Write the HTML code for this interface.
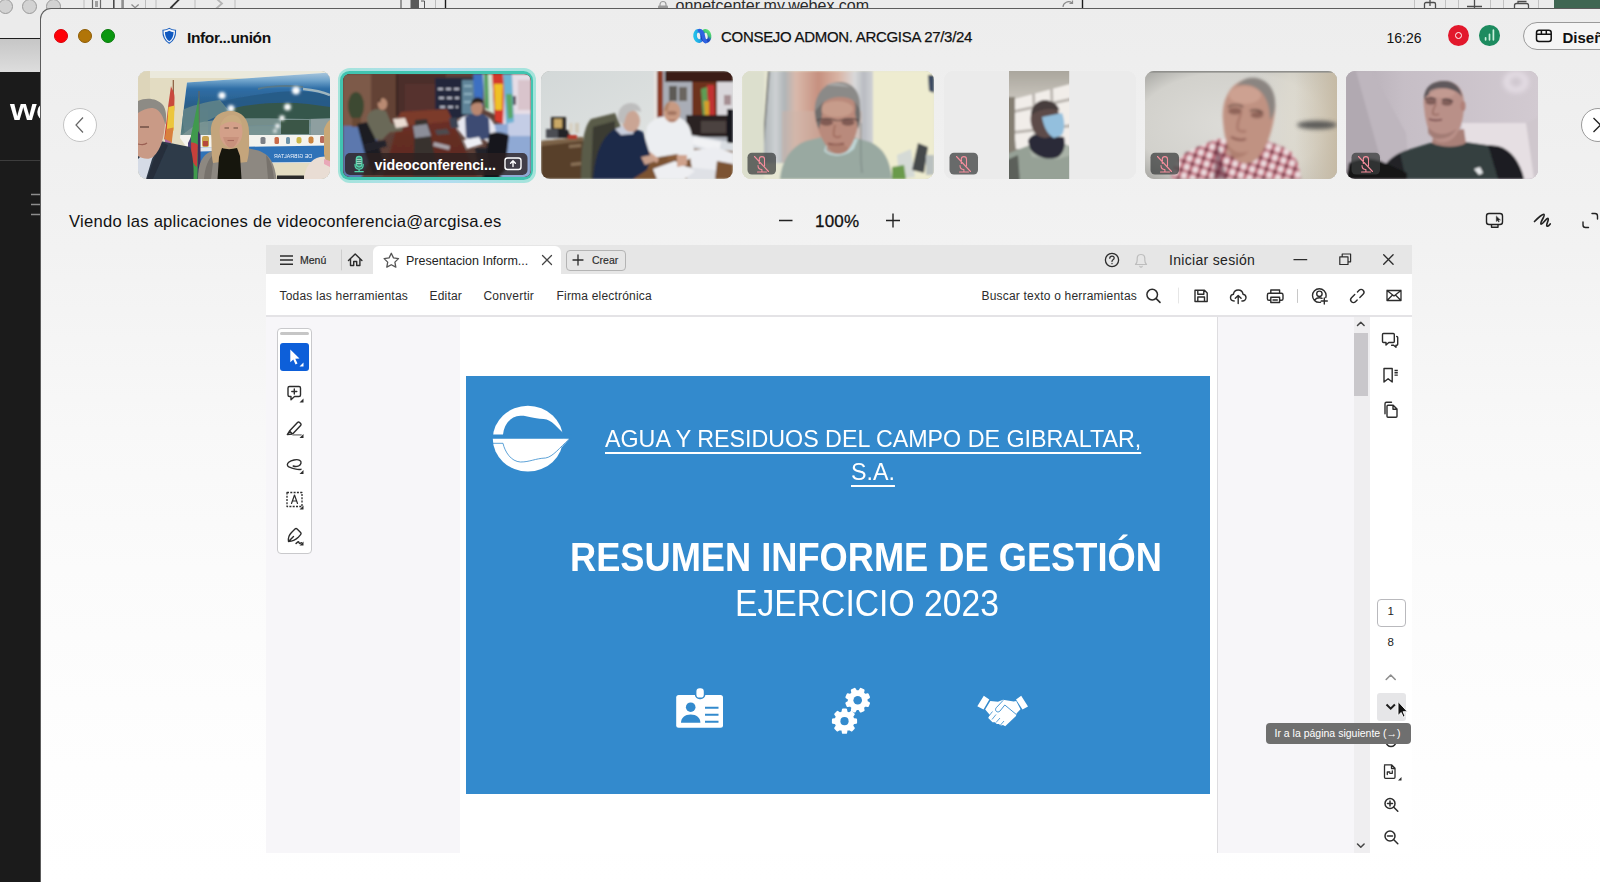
<!DOCTYPE html>
<html lang="es">
<head>
<meta charset="utf-8">
<title>CONSEJO ADMON. ARCGISA 27/3/24</title>
<style>
*{box-sizing:border-box;margin:0;padding:0}
html,body{width:1600px;height:882px;overflow:hidden;background:#ececec;font-family:"Liberation Sans",sans-serif;color:#111}
.abs{position:absolute}
#stage{position:relative;width:1600px;height:882px;overflow:hidden;background:#ececec}
/* background browser window */
#bgtop{left:0;top:0;width:1600px;height:39px;background:#ebebeb;border-bottom:1px solid #1c1c1c}
#bgbar{left:0;top:39px;width:60px;height:34px;background:linear-gradient(#c6c6c6,#dedede)}
#bgside{left:0;top:72px;width:60px;height:810px;background:#1b1b1b}
.gdot{width:15px;height:15px;border-radius:50%;background:#d2d2d2;border:1px solid #9a9a9a;top:-1px}
/* main window */
#win{left:40px;top:8px;width:1600px;height:900px;border-radius:11px 0 0 0;border:1px solid #5c5c5c;border-right:0;border-bottom:0;background:linear-gradient(#ededed 0,#efefef 100px,#f2f2f2 240px,#f8f8f8 420px,#fbfbfb 560px,#fefefe 760px,#fff 874px)}
.tl{width:14px;height:14px;border-radius:50%;top:29px}
.t{white-space:nowrap;line-height:1}
.thumb{top:71px;width:192px;height:108px;border-radius:9px;overflow:hidden}
.thumb svg{display:block}
.mute{left:9px;top:81px;width:28px;height:21px;border-radius:5px;background:rgba(80,80,80,.78)}
/* acrobat */
#acro{left:266px;top:245px;width:1146px;height:608px;background:#f7f6f9;overflow:hidden}
#tabbar{left:0;top:0;width:1146px;height:29px;background:#e6e6e6}
#tab{left:107px;top:1px;width:188px;height:28px;background:#fff;border-radius:6px 6px 0 0}
#toolbar{left:0;top:29px;width:1146px;height:43px;background:#fff;border-bottom:2px solid #e4e3e6}
.ic{position:absolute;overflow:visible}
</style>
</head>
<body>
<div id="stage">
<!-- BG -->
<div id="bgtop" class="abs">
  <div class="abs gdot" style="left:-2px"></div>
  <div class="abs gdot" style="left:22px"></div>
  <div class="abs gdot" style="left:46px"></div>
  <svg class="ic" style="left:0;top:0" width="1600" height="9" viewBox="0 0 1600 9">
    <g fill="none" stroke="#bdbdbd" stroke-width="1">
      <path d="M84 0V9M145.5 0V9M156 0V9M235 0V9M195 0V9"/>
    </g>
    <rect x="92.5" y="-3" width="8" height="14" fill="none" stroke="#6a6a6a" stroke-width="1.2"/>
    <path d="M95 2h3M95 4h3M95 6h3" stroke="#555" stroke-width="1"/>
    <path d="M113.8 0V9" stroke="#4a4a4a" stroke-width="1.6"/>
    <path d="M122.6 0V9" stroke="#8e8e8e" stroke-width="2.6"/>
    <path d="M131.5 4.5l3.6 3.2 3.6-3.2" fill="none" stroke="#8c8c8c" stroke-width="1.3"/>
    <path d="M179.500 -1l-8.5 8.500 8.500 8.500" fill="none" stroke="#333" stroke-width="1.800"/>
    <path d="M213.5 -4l8.500 7.5-8.500 7.500" fill="none" stroke="#b5b5b5" stroke-width="1.8"/>
    <rect x="410.500" y="-2" width="8.500" height="12" fill="#595959"/>
    <path d="M401 0V9" stroke="#444" stroke-width="1"/>
    <path d="M421 1h3.500V9" fill="none" stroke="#555" stroke-width="1"/>
    <path d="M435.500 0V9" stroke="#bbb" stroke-width="1"/>
    <path d="M445.500 0V9" stroke="#1a1a1a" stroke-width="1.400"/>
    <path d="M1082.500 0V9" stroke="#1a1a1a" stroke-width="1.400"/>
    <rect x="658" y="5.500" width="10" height="8" rx="1" fill="#9a9a9a"/>
    <path d="M660 6V4.500a3 3 0 0 1 6 0V6" fill="none" stroke="#9a9a9a" stroke-width="1.200"/>
    <path d="M1063 7a5.500 5.500 0 0 1 9-4M1072.500 0.500v3h-3" fill="none" stroke="#8a8a8a" stroke-width="1.200"/>
    <g fill="none" stroke="#c2c2c2" stroke-width="1"><path d="M1414.500 0V9M1445.500 0V9M1458.500 0V9M1490.500 0V9M1503.500 0V9M1538.500 0V9"/></g>
    <rect x="1424.500" y="2.500" width="11" height="10" rx="1.500" fill="none" stroke="#4d4d4d" stroke-width="1.300"/>
    <path d="M1430 0V6" stroke="#4d4d4d" stroke-width="1.300"/>
    <path d="M1474.500 0V8M1467 6.500h15" stroke="#4d4d4d" stroke-width="1.300"/>
    <rect x="1514.500" y="3.500" width="14" height="10" rx="2" fill="none" stroke="#4d4d4d" stroke-width="1.300"/>
    <path d="M1518 3V1.500h8.500" fill="none" stroke="#4d4d4d" stroke-width="1.300"/>
    <rect x="1554" y="0" width="46" height="9" fill="#3f6652"/>
  </svg>
  <div class="abs t" style="left:675.500px;top:-2px;font-size:16px;color:#2a2a2a;letter-spacing:0">onnetcenter.my.webex.com</div>
</div>
<div id="bgbar" class="abs"></div>
<div id="bgside" class="abs">
  <div class="abs t" style="left:10px;top:24px;font-size:29px;font-weight:bold;color:#fff;letter-spacing:-.500px;transform:scaleX(1.180);transform-origin:0 0">we</div>
  <div class="abs" style="left:0;top:88px;width:60px;height:1px;background:#3d3d3d"></div>
  <svg class="ic" style="left:28px;top:118px" width="14" height="30" viewBox="0 0 14 30"><path d="M3 4.500h12M3 14.500h12M3 24.500h12" stroke="#8c8c8c" stroke-width="1.400"/></svg>
</div>
<!-- WINDOW -->
<div id="win" class="abs"></div>
<div class="abs tl" style="left:54px;background:#fe0006;border:1px solid #d9000a"></div>
<div class="abs tl" style="left:78px;background:#b17508;border:1px solid #8e5c05"></div>
<div class="abs tl" style="left:101px;background:#0a970f;border:1px solid #0a7a0d"></div>
<svg class="ic" style="left:161px;top:27px" width="17" height="18" viewBox="161 27 17 18"><path d="M169.250 28.400c2 1.300 4 1.700 6.300 1.800.300 5.800-1.600 10.200-6.300 13-4.700-2.800-6.600-7.200-6.300-13 2.300-.100 4.300-.500 6.300-1.800z" fill="#f4f6fb" stroke="#1a5fbe" stroke-width="1.100"/><path d="M169.250 30.700c1.500.900 2.700 1.200 4.300 1.300.100 4.100-1.200 7-4.300 9.200-3.100-2.200-4.400-5.100-4.300-9.200 1.600-.100 2.800-.400 4.300-1.300z" fill="#1059c0"/></svg>
<div class="abs t" style="left:187px;top:29.600px;font-size:15.500px;font-weight:bold;color:#111;letter-spacing:-.380px">Infor...unión</div>
<svg class="ic" style="left:690px;top:26px" width="26" height="20" viewBox="690 26 26 20"><defs><linearGradient id="wxa" x1="0" y1="0" x2="1" y2="0"><stop offset="0" stop-color="#22c0ea"/><stop offset=".55" stop-color="#23a0e2"/><stop offset="1" stop-color="#2f5fe0"/></linearGradient><linearGradient id="wxb" x1="1" y1="0" x2=".2" y2="1"><stop offset="0" stop-color="#5fe36c"/><stop offset=".35" stop-color="#3fc07a"/><stop offset=".6" stop-color="#1f4fc4"/><stop offset="1" stop-color="#1a3cae"/></linearGradient></defs><ellipse cx="698.700" cy="36" rx="3.600" ry="5.100" fill="none" stroke="url(#wxa)" stroke-width="3.700" transform="rotate(-8 698.700 36)"/><ellipse cx="705.900" cy="36" rx="3.600" ry="5.100" fill="none" stroke="url(#wxb)" stroke-width="3.700" transform="rotate(-8 705.900 36)"/><path d="M699.500 30.500c3 0 3.500 3.500 4 6.500s.8 4 2.200 4.600" fill="none" stroke="#2f62e2" stroke-width="3.600" stroke-linecap="round"/></svg>
<div class="abs t" style="left:721px;top:29.300px;font-size:15px;color:#111;letter-spacing:-.300px;-webkit-text-stroke:.250px #111">CONSEJO ADMON. ARCGISA 27/3/24</div>
<div class="abs t" style="left:1386.500px;top:30.800px;font-size:14px;color:#111">16:26</div>
<div class="abs" style="left:1448.100px;top:24.900px;width:21px;height:21px;border-radius:50%;background:#e2182c"></div>
<div class="abs" style="left:1454.900px;top:31.700px;width:7.400px;height:7.400px;border-radius:50%;border:1.400px solid #fff"></div>
<div class="abs" style="left:1479.400px;top:25px;width:20.600px;height:20.600px;border-radius:50%;background:#1d8b5f"></div>
<svg class="ic" style="left:1479px;top:25px" width="22" height="22" viewBox="1479 25 22 22"><path d="M1485.600 39.800v-2M1489.500 39.800v-5.500M1493.400 39.800v-9.600" stroke="#c9eedb" stroke-width="1.700" stroke-linecap="round"/></svg>
<div class="abs" style="left:1522.500px;top:21.500px;width:120px;height:28px;border-radius:14px;border:1px solid #9a9a9a;background:#f5f5f5"></div>
<svg class="ic" style="left:1534px;top:27px" width="20" height="18" viewBox="1534 27 20 18"><rect x="1536.500" y="30.300" width="14.700" height="11.200" rx="2.500" fill="none" stroke="#111" stroke-width="1.500"/><path d="M1536.500 34.300h14.700M1541.400 30.300v4M1546.300 30.300v4" stroke="#111" stroke-width="1.500"/></svg>
<div class="abs t" style="left:1562.500px;top:29.500px;font-size:15px;font-weight:bold;color:#111">Diseño</div>
<!-- nav arrows -->
<div class="abs" style="left:63px;top:108px;width:34px;height:34px;border-radius:50%;background:#fff;border:1px solid #c4c4c4"></div>
<svg class="ic" style="left:63px;top:108px" width="34" height="34" viewBox="0 0 34 34"><path d="M20 9.500l-7 7.500 7 7.500" fill="none" stroke="#666" stroke-width="1.200"/></svg>
<div class="abs" style="left:1581px;top:108px;width:34px;height:34px;border-radius:50%;background:#fff;border:1px solid #9a9a9a"></div>
<svg class="ic" style="left:1581px;top:108px" width="34" height="34" viewBox="0 0 34 34"><path d="M12.500 10l7 7-7 7" fill="none" stroke="#222" stroke-width="1.300"/></svg>
<!-- THUMBS -->
<div class="abs thumb" id="th1" style="left:138px;background:#7c8f96"><!--TH1--><svg width="192" height="108" viewBox="0 0 192 108" preserveAspectRatio="none" >
<defs>
<filter id="b1" x="-5%" y="-5%" width="110%" height="110%"><feGaussianBlur stdDeviation=".7"/></filter>
<filter id="b1b" x="-20%" y="-20%" width="140%" height="140%"><feGaussianBlur stdDeviation="1.800"/></filter>
<linearGradient id="sky1" x1="0" y1="0" x2="0" y2="1"><stop offset="0" stop-color="#a9c6dc"/><stop offset=".13" stop-color="#6fa3cb"/><stop offset=".26" stop-color="#2f6ea6"/><stop offset=".5" stop-color="#2a5f8c"/><stop offset=".75" stop-color="#3d6b73"/><stop offset="1" stop-color="#5f8283"/></linearGradient>
<clipPath id="pc1"><path d="M49 11.600L192 1.500V64H42.500z"/></clipPath>
</defs>
<rect width="192" height="108" fill="#e3dcc2"/>
<rect width="192" height="7" fill="#ebe9dc"/>
<path d="M0 0h12v60H0z" fill="#ddd5ba"/>
<g filter="url(#b1)">
 <!-- poster -->
 <path d="M49 11.600L192 1.500V92H60L42 67z" fill="#f4f3ee"/>
 <path d="M49 11.600L192 1.500V64H42.500z" fill="url(#sky1)"/>
 <g clip-path="url(#pc1)">
  <path d="M70 34c20-6 45-10 70-13 20-2 40 0 52 3v30c-20 2-40 2-60 1-25-1-45 3-62 8z" fill="#285a86" opacity=".9"/>
  <path d="M92 38c20-5 50-8 78-5l22 3v16l-60 2c-15 0-30 1-42 3z" fill="#36564c"/>
  <path d="M42 40c10-5 25-9 40-11l10 12c-15 4-30 12-45 22z" fill="#5f8388" opacity=".9"/>
  <path d="M60 52c25-6 60-5 110-4l22-1v17H44z" fill="#7f9896" opacity=".85"/>
  <path d="M143 49h28v14h-28z" fill="#3b5746"/>
  <path d="M173 48h19v16h-19z" fill="#8e9fa0"/>
  <path d="M120 18c10-3 30-4 45-2" stroke="#56788a" stroke-width="2" fill="none"/>
  <path d="M165 18c10 1 20 3 27 6" stroke="#9fb6bf" stroke-width="2.500" fill="none"/>
 </g>
 <g filter="url(#b1b)" fill="#fff"><circle cx="84" cy="24.500" r="3.600"/><circle cx="158" cy="19.500" r="4"/><circle cx="149.500" cy="36" r="3.500"/><circle cx="93" cy="37.500" r="3.500"/><circle cx="144" cy="47" r="2.800"/><circle cx="139.500" cy="55" r="2.300"/><circle cx="137" cy="60" r="1.800"/></g>
 <!-- white strip + crests -->
 <g><rect x="64" y="65" width="7" height="11" rx="2" fill="#c9a24d"/><rect x="65" y="70" width="5" height="5" fill="#b5463d"/>
 <rect x="122.500" y="66" width="5" height="7" rx="1.500" fill="#7b7f86"/><rect x="136.500" y="66" width="4.500" height="7" rx="1.500" fill="#c96a4a"/><rect x="148" y="66" width="4" height="7" rx="1.500" fill="#6d93a8"/><rect x="158.500" y="66" width="5" height="6.500" rx="2" fill="#c9b64a"/><rect x="170.500" y="65.500" width="5" height="7" rx="2" fill="#c9843f"/><rect x="182" y="65" width="4.500" height="7" rx="1.500" fill="#b96a5a"/></g>
 <path d="M62 76.500L192 74.500V91L62 92z" fill="#2f72b8"/>
 <path d="M62 76.500L80 76V80L62 80.500z" fill="#dfe6ee"/>
 <text x="-174" y="86.500" font-family="Liberation Sans,sans-serif" font-size="5.300" fill="#eef3fa" transform="scale(-1 1)">DE GIBRALTAR</text>
 <!-- spain flag -->
 <path d="M35.300 9v30" stroke="#8a5a3a" stroke-width="1.200"/>
 <path d="M33 15c1 4 3.500 5 3.500 12l-.3 12c-1 8-2 22-3 33l-7-4c1-10 3-22 4-33z" fill="#c94a3c"/>
 <path d="M30.500 36l6-1.500-.8 25-7.200 2z" fill="#ecc63c"/>
 <path d="M28.500 58l7-1.500-1.800 15.500-7.200-3.500z" fill="#d9803c"/>
 <path d="M27 68l6 3-1 5-5-2z" fill="#b06aa0"/>
 <!-- green flag -->
 <path d="M61 20v88" stroke="#6b6458" stroke-width="1.100"/>
 <path d="M60.500 26c-2 14-6 30-9 46l2 36h8z" fill="#3f9a4d"/>
 <path d="M52 72c3-1 6 0 8 2l-1 22c-3-2-5-6-5.500-10z" fill="#c8403a"/>
 <path d="M60 60l2.500 4v44h-3z" fill="#3a3360"/>
 <path d="M50 72l3-6 .5 42h-3z" fill="#4b3f78"/>
</g>
<g filter="url(#b1)">
 <!-- woman -->
 <path d="M60 108c0-14 3-24 14-28l14-4 16 0 14 3c12 3 18 10 20.500 29z" fill="#8d8881"/>
 <path d="M66 108c1-12 4-20 10-25l-3 25zM128 84c5 5 7 14 8 24h-6z" fill="#77726c"/>
 <path d="M73 62c-1-12 6-22 19-22 12 0 19 8 19 21 0 10 1 20-2 30l-9 1-18-1-7 1c-2-9-1-20-2-30z" fill="#c4a57b"/>
 <path d="M84 77c4 1.500 10 1.500 15 0l3 8 1.500 23H79.500l1.500-22z" fill="#15130f"/>
 <ellipse cx="93" cy="60.500" rx="11.500" ry="16" fill="#d3a089"/><path d="M85 66c2 8 6 11 8 11s6-3 8-11z" fill="#c8917c"/>
 <path d="M82.500 55c2-8 8-11 12-11 5 0 9 4 9.500 10-5-4-14-5-21.500 1z" fill="#c9ab80"/>
 <path d="M86.500 57h4.500M95.500 57h4.500" stroke="#6b4a3c" stroke-width="1.100"/>
 <path d="M89.500 69.500h6.500" stroke="#a8685c" stroke-width="1.100"/>
 <!-- man -->
 <path d="M0 78l22-8 30 6c3 9 4 20 3.500 32H0z" fill="#2f3a49"/>
 <path d="M0 88l12-12 10-4-8 16-6 20H0z" fill="#d5dbe6"/>
 <path d="M22 71l8 3-15 34h-6z" fill="#252e3b"/>
 <path d="M0 38c6-8 18-9 24-2 3 4 4 10 3 18-1 10-3 24-12 32-4 3-10 2-15-1z" fill="#c99a86"/>
 <path d="M0 30c8-4 19-3 25 4 3 4 4 12 2.500 20-2-7-4-12-8-15-6-4-13-1-19.500 3z" fill="#8d8b85"/>
 <path d="M2 56h9" stroke="#5a3d34" stroke-width="1.200"/>
 <path d="M0 73c4 1 7 1 9-1" stroke="#9a5f52" stroke-width="1.100" fill="none"/>
 <!-- right person -->
 <path d="M166 108c1-12 7-20 16-22l10-1v23z" fill="#e9ddd4"/>
 <path d="M186 58c2-5 4-8 6-9v46c-3-2-5-6-6-12z" fill="#c9a877"/>
 <path d="M186 88l6 2v6l-6-3z" fill="#e9a8b8"/>
 <rect x="139" y="104.500" width="27" height="3.500" fill="#2a2a2a"/>
</g>
</svg><!--/TH1--></div>
<div class="abs" style="left:337.500px;top:68px;width:198.500px;height:114.500px;border-radius:12px;background:linear-gradient(90deg,#a4e4da,#b4dcf2 50%,#a4e4da)"></div>
<div class="abs" style="left:340.300px;top:71px;width:193px;height:108.500px;border-radius:9.500px;background:#41c4b0"></div>
<div class="abs thumb" id="th2" style="left:343px;top:73.700px;width:187.500px;height:103px;border-radius:7px;background:#3a2c2a"><!--TH2--><svg width="188" height="105" viewBox="0 0 188 105" preserveAspectRatio="none" >
<defs>
<filter id="b2" x="-5%" y="-5%" width="110%" height="110%"><feGaussianBlur stdDeviation=".9"/></filter>
<linearGradient id="tb2" x1="0" y1="0" x2="0" y2="1"><stop offset="0" stop-color="#6e3026"/><stop offset="1" stop-color="#5a2a22"/></linearGradient>
</defs>
<rect width="188" height="105" fill="#5d4038"/>
<g filter="url(#b2)">
 <!-- walls -->
 <rect x="0" y="0" width="30" height="60" fill="#7d5a49"/>
 <rect x="28" y="0" width="26" height="60" fill="#644236"/>
 <rect x="53" y="0" width="50" height="42" fill="#4b2d2c"/>
 <rect x="53" y="0" width="1.500" height="42" fill="#2a1a1c"/>
 <rect x="62" y="10" width="30" height="30" fill="#56302f"/>
 <!-- shelf -->
 <rect x="92" y="4" width="40" height="40" fill="#22263a"/>
 <path d="M95 15h22M96 24h20M97 33h18" stroke="#b9bccb" stroke-width="2.200" stroke-dasharray="5 3"/>
 <rect x="119" y="6" width="12" height="34" fill="#5e8398"/>
 <path d="M121 12h8M121 20h8M121 28h8" stroke="#9fc0cc" stroke-width="1.600"/>
 <!-- window right -->
 <rect x="160" y="0" width="28" height="64" fill="#e6dde6"/>
 <rect x="175" y="6" width="13" height="30" fill="#d9c4cc"/>
 <rect x="167" y="22" width="6" height="9" fill="#5a4a58"/>
 <!-- floor -->
 <path d="M0 52h40L18 105H0z" fill="#5c78ae"/>
 <path d="M150 50h38v55h-30z" fill="#8fa9d4"/>
 <path d="M165 40h23v22h-23z" fill="#c4cde6"/>
 <!-- flags -->
 <path d="M130 0h11l-1 34-8 2z" fill="#3d70c2"/>
 <path d="M140 0h10l1 40-9-4z" fill="#d6e6d6"/>
 <path d="M141 0h4l1 36-4-2z" fill="#4f9b5c"/>
 <path d="M149 0h13l-2 50-8-3z" fill="#d4382c"/>
 <path d="M151 10l9 0-1 26-7 0z" fill="#efc126"/>
 <path d="M160 0h9l2 48-8 2z" fill="#6db2d2"/>
 <path d="M163 20l6 0 1 24-5 1z" fill="#58a86a"/>
 <!-- table -->
 <path d="M58 38l46-3 30 67H40z" fill="url(#tb2)"/>
 <path d="M58 38l46-3 6 12-60 6z" fill="#7c3a2c"/>
 <path d="M72 46l12-1 12 57H70z" fill="#39302f"/>
 <path d="M70 52l14-2 4 12-16 2z" fill="#8c8e99"/>
 <path d="M92 56l12-1 3 5-13 1z" fill="#4d4b50"/>
 <path d="M91 68l16 4-1 4-16-4z" fill="#a9a4ab"/>
 <!-- plant -->
 <ellipse cx="13" cy="32" rx="8" ry="14" fill="#3d4a31"/>
 <rect x="9" y="44" width="9" height="9" fill="#6a4a35"/>
 <!-- left man -->
 <path d="M24 44c1-6 6-9 11-9l8 2 5 12 12 4-1 4-12 1-8 8-12-2z" fill="#6b6959"/>
 <ellipse cx="39.500" cy="30" rx="4.800" ry="6" fill="#b98a72"/>
 <path d="M34.500 28c0-4 3-6 6-5.500-2 1-3 3-3 6z" fill="#5c3f30"/>
 <path d="M50 45l12-1 3 8-12 2z" fill="#e9dcd2"/>
 <!-- left chair -->
 <path d="M14 50l10-2 12 24 6 22-12 6-8-20z" fill="#1b1b24"/>
 <path d="M20 70l22-4 2 6-20 6z" fill="#23232c"/>
 <!-- right man -->
 <path d="M112 52c2-6 8-10 14-11h14c6 1 10 5 12 12l2 12-8 4-6-4-14 3-6-6z" fill="#e6e7f0"/>
 <path d="M122 43l6-3h12l6 4 1 20-12 3-12-3z" fill="#3d4c73"/>
 <ellipse cx="134" cy="34" rx="6" ry="7.500" fill="#b9876f"/>
 <path d="M127.500 32c0-6 4-8.500 7.500-8.500s6.500 3 6 7c-3-2.500-9-3-13.500 1.500z" fill="#2a221f"/>
 <path d="M120 66l16-3 4 7-16 5z" fill="#edeef4"/>
 <path d="M106 44l8 0 2 10-8 0z" fill="#3a4253"/>
 <!-- right chair -->
 <path d="M146 60c6-3 14-2 20 1l-4 36-8 8h-14z" fill="#15151b"/>
 <path d="M132 74l12 0 2 20-10 4z" fill="#20202a"/>
</g>
<rect x="2" y="79" width="182.500" height="22" rx="5" fill="#2b2020" fill-opacity=".78"/>
<g fill="none" stroke="#52d3aa" stroke-width="1.300" stroke-linecap="round"><rect x="13.300" y="82.500" width="5.600" height="10.500" rx="2.800" fill="#52d3aa" fill-opacity=".55"/><path d="M12 90.500c0 3 1.800 4.600 4.100 4.600s4.100-1.600 4.100-4.600M16.100 95.300v2.200M12 97.700h8.200"/><path d="M14 85.500h4M14 87.500h4M14 89.500h4" stroke-width=".6" stroke="#d8fff0"/></g>
<text x="31.500" y="95.500" font-family="Liberation Sans,sans-serif" font-weight="bold" font-size="14.600" fill="#fff" textLength="121.500" lengthAdjust="spacingAndGlyphs">videoconferenci...</text>
<g fill="none" stroke="#fff" stroke-width="1.400" stroke-linecap="round" stroke-linejoin="round"><rect x="162" y="84" width="16" height="11.500" rx="2.500"/><path d="M170 92.500v-5.500M167.600 89.200l2.400-2.400 2.400 2.400"/></g>
</svg><!--/TH2--></div>
<div class="abs thumb" id="th3" style="left:541px;background:#a9a9a4"><!--TH3--><svg width="192" height="108" viewBox="0 0 192 108" preserveAspectRatio="none" >
<defs>
<filter id="b3" x="-5%" y="-5%" width="110%" height="110%"><feGaussianBlur stdDeviation="1"/></filter>
<linearGradient id="w3" x1="0" y1="0" x2="1" y2="1"><stop offset="0" stop-color="#d3d8d8"/><stop offset="1" stop-color="#e6e8e6"/></linearGradient>
</defs>
<rect width="192" height="108" fill="url(#w3)"/>
<g filter="url(#b3)">
 <!-- right room -->
 <rect x="116" y="0" width="76" height="70" fill="#a9adb6"/>
 <rect x="124" y="0" width="68" height="11" fill="#3a1b15"/>
 <rect x="115" y="0" width="7" height="46" fill="#8c3b28"/>
 <rect x="113" y="0" width="3" height="60" fill="#e9e4e0"/>
 <rect x="128" y="15" width="8" height="15" fill="#5d5a55"/><rect x="138" y="16" width="8" height="14" fill="#6a655e"/>
 <rect x="151" y="11" width="25" height="42" fill="#6d321f"/>
 <path d="M160 18l6-2 2 30-6 2z" fill="#5f9d55"/>
 <path d="M166 14l7 0 1 36-6 1z" fill="#c23232"/>
 <path d="M163 30l5 0 0 16-4 1z" fill="#d5a02c"/>
 <rect x="176" y="11" width="16" height="34" fill="#dad8dc"/>
 <rect x="183" y="24" width="7" height="10" fill="#a58e92"/>
 <path d="M145 44h47v22h-47z" fill="#2b2321"/>
 <path d="M160 50h25v12h-25z" fill="#4b4340"/>
 <path d="M186 38h6v34h-6z" fill="#16171b"/>
 <!-- right desk light -->
 <path d="M150 64l34 6 8 4v20l-44-14z" fill="#d9dde2"/>
 <path d="M152 66l28 5-2 10-28-8z" fill="#f1f2f4"/>
 <!-- cabinet -->
 <path d="M0 70l42-4v42H0z" fill="#59402a"/>
 <path d="M0 70l42-4 0 4-42 5z" fill="#7d6448"/>
 <path d="M28 74l12-1v3l-12 1zM30 92l10-1v3l-10 1z" fill="#8a7258"/>
 <rect x="10" y="46" width="15" height="13" fill="#2d2a25"/><rect x="13" y="48" width="8" height="9" fill="#c9a866"/>
 <rect x="5" y="58" width="12" height="9" fill="#4b4d52"/><rect x="17" y="59" width="12" height="8" fill="#202226"/>
 <rect x="27" y="64" width="9" height="4" fill="#b3372c"/>
 <rect x="28" y="52" width="4" height="10" fill="#d8d2c4"/><rect x="34" y="52" width="4" height="10" fill="#cfc8b8"/>
 <!-- chair / jacket -->
 <path d="M40 108c0-30 2-52 10-60l24-6 6 14-4 52z" fill="#5a5b49"/>
 <path d="M52 56l22-6 0 58h-24z" fill="#3a3a33"/>
 <!-- desk -->
 <path d="M88 100l40-24 64 4v28H84z" fill="#7b5232"/>
 <path d="M148 80l26-4 18 6v24l-40-2z" fill="#ecedf1"/>
 <path d="M146 96l30 3v9h-30z" fill="#dfe1e6"/>
 <path d="M176 90l16 3v15h-18z" fill="#7b5232"/>
 <path d="M128 76l14 2-4 10-12 2z" fill="#8a5c38"/>
 <path d="M112 98l22-8 20 10-10 8h-28z" fill="#eeeff2"/>
 <!-- man 2 white shirt -->
 <path d="M106 56c4-8 14-11 24-11 10 0 18 6 20 16l4 24-8 4-10-6-24 4-8-14z" fill="#eceef1"/>
 <ellipse cx="131" cy="41" rx="8.500" ry="10.500" fill="#c89a82"/>
 <path d="M123 40c0-6 3-9 7-10-2 3-3 6-3 10z" fill="#b08468"/>
 <ellipse cx="131" cy="42" rx="5" ry="2" fill="#8a5c4a" opacity=".6"/><path d="M128 49c2 1 4 1 6 0" stroke="#8a5448" stroke-width="1.200" fill="none"/>
 <ellipse cx="92" cy="52" rx="4.500" ry="2" fill="#8a6458" opacity=".6"/>
 <path d="M136 84l10 0 0 10-10 2zM108 80l10 8-2 4-10-6z" fill="#cfa28c"/>
 <!-- man 1 navy -->
 <path d="M52 108c2-24 8-42 22-50l14-3 14 6 8 26-4 12-14 9z" fill="#1f2a4a"/>
 <path d="M74 58l10-4 10 3-2 6-12 1z" fill="#c9cfdd"/>
 <ellipse cx="90" cy="50" rx="9" ry="11" fill="#caa594"/>
 <path d="M77 46c0-9 6-14 13-14 6 0 10 4 10 9-4-2-8-2-12 0-3 2-4 8-5 12-3 0-6-3-6-7z" fill="#bdbdbd"/>
 <path d="M100 86l10-2 4 6-10 4z" fill="#c8a08c"/>
</g>
</svg><!--/TH3--></div>
<div class="abs thumb" id="th4" style="left:742px;background:#c9c6b4"><!--TH4--><svg width="192" height="108" viewBox="0 0 192 108" preserveAspectRatio="none" >
<defs>
<filter id="b4" x="-5%" y="-5%" width="110%" height="110%"><feGaussianBlur stdDeviation="1.200"/></filter>
<linearGradient id="p4" x1="0" y1="0" x2="1" y2="0"><stop offset="0" stop-color="#a9b0b3"/><stop offset=".12" stop-color="#cdd1d3"/><stop offset=".2" stop-color="#b0b5b8"/><stop offset=".3" stop-color="#d9b9ab"/><stop offset=".5" stop-color="#c6907f"/><stop offset=".68" stop-color="#d9b5a6"/><stop offset=".82" stop-color="#d9d9da"/><stop offset=".9" stop-color="#b9bcc2"/><stop offset="1" stop-color="#d5d6d8"/></linearGradient>
</defs>
<rect width="192" height="108" fill="#e6e6d2"/>
<g filter="url(#b4)">
 <path d="M27 0h104l2 92H20z" fill="url(#p4)"/>
 <path d="M40 40h80v52H40z" fill="#cdb3a8" opacity=".5"/>
 <path d="M27 0L19 100" stroke="#6e6e6c" stroke-width="1.600"/>
 <rect x="131" y="0" width="61" height="108" fill="#eeecd0"/>
 <rect x="0" y="0" width="22" height="108" fill="#dcdfcd"/>
 <path d="M186 4l6 0 0 18-5-2z" fill="#3b4a62"/>
 <!-- right objects -->
 <path d="M155 84l14-6 4 28-16 2z" fill="#d5dad6"/>
 <path d="M176 72l10 4-4 26-12-3z" fill="#45484b"/>
 <path d="M150 96l12-2 2 14h-14z" fill="#6a9a4c"/>
 <path d="M184 84h8v20h-8z" fill="#b9c0bf"/>
 <!-- sweater -->
 <path d="M38 108c2-18 10-32 26-38l16-4h30l18 5c14 6 20 18 22 37z" fill="#99a9a1"/>
 <path d="M82 80c6 6 20 7 30-2l4-10-30 0z" fill="#bfd6d6"/>
 <!-- head -->
 <path d="M74 42c0-16 10-26 24-26 12 0 20 10 19 26 0 14-4 28-10 36-4 5-12 7-18 2-8-7-15-22-15-38z" fill="#b98a7b"/>
 <path d="M73 44c-2-18 8-33 24-33 14 0 23 10 21 30-3-10-8-15-20-15-12 0-20 6-25 18z" fill="#8b8a88"/>
 <path d="M84 14c6-3 16-3 24 2-8-1-16-1-24-2z" fill="#a9a9a8"/>
 <ellipse cx="95" cy="38" rx="16" ry="8" fill="#caa090" opacity=".8"/>
 <path d="M73 40c0 8 2 14 4 18l3-14c-1-6 0-10 2-14zM118 38c1 8 0 14-2 20l-3-16c1-5 0-9-1-12z" fill="#6f6d6c"/>
 <ellipse cx="84.500" cy="51.500" rx="6.500" ry="3.300" fill="#6e4a44" opacity=".75"/><ellipse cx="106" cy="51.500" rx="6.500" ry="3.300" fill="#6e4a44" opacity=".75"/>
 <path d="M74 49.500c7-2.500 14-2.500 20 0M98 49.500c6-2.500 12-2.500 19 0M94 49.500h4" stroke="#4d3c3c" stroke-width="1.200" fill="none"/>
 <path d="M93 54c-1 5-2 8-1 11 2 1.500 5 1.500 7 0" stroke="#9a6458" stroke-width="1.600" fill="none" opacity=".8"/>
 <path d="M86 72.500c5 1.500 11 1.500 16 0" stroke="#7e4a44" stroke-width="1.700" fill="none"/>
 <ellipse cx="95" cy="78" rx="11" ry="5" fill="#a87868" opacity=".6"/>
 <path d="M119 52c0 16-1 34 1 50" stroke="#6f7a78" stroke-width=".8" fill="none"/>
</g>
<g><rect x="5.500" y="81.800" width="28.500" height="21.700" rx="4.500" fill="#3a3d3d" fill-opacity=".74"/><g fill="none" stroke="#f58d9c" stroke-width="1.100" stroke-linecap="round"><path d="M17.300 92.500v-4.300a2.600 2.600 0 0 1 5.200 0v6.500M16 94.500c0 2.500 1.700 4 3.900 4M19.900 98.500v2.300M15.500 101h9M12.500 85.500l14 15"/></g></g></svg><!--/TH4--></div>
<div class="abs thumb" id="th5" style="left:944px;background:#ebebeb"><!--TH5--><svg width="192" height="108" viewBox="0 0 192 108" preserveAspectRatio="none" >
<defs>
<filter id="b5" x="-5%" y="-5%" width="110%" height="110%"><feGaussianBlur stdDeviation="1"/></filter>
<linearGradient id="c5" x1="0" y1="0" x2="0" y2="1"><stop offset="0" stop-color="#a6a299"/><stop offset="1" stop-color="#cac6be"/></linearGradient>
<clipPath id="cp5"><rect x="65" y="0" width="60.200" height="108"/></clipPath>
</defs>
<rect width="192" height="108" fill="#ebebeb"/>
<g clip-path="url(#cp5)"><g filter="url(#b5)">
 <rect x="60" y="-4" width="70" height="116" fill="#8f8a80"/>
 <rect x="60" y="-4" width="70" height="34" fill="url(#c5)"/>
 <path d="M67 29l63-17v66l-58 0z" fill="#f1ede9"/>
 <path d="M66 40l64-14v3l-64 14zM68 60l62-7v3l-62 7z" fill="#b9b4ae"/>
 <path d="M88 22l3 0 2 54h-3zM106 17l3 0 1 34h-3z" fill="#bdb8b2"/>
 <rect x="60" y="26" width="11" height="56" fill="#857f73"/>
 <!-- jacket -->
 <path d="M60 84l26-10 40 4 4 34H60z" fill="#96a196"/>
 <path d="M60 90l14-6 2 28H60z" fill="#5b615a"/>
 <path d="M84 74l30-4 14 6v8l-14 4-26-2z" fill="#aab3a8"/>
 <!-- scarf -->
 <path d="M84 70c2-6 8-8 14-6l22 2c2 8 0 16-6 20-10 4-22 0-28-8z" fill="#2b2a38"/>
 <!-- head -->
 <ellipse cx="101" cy="48" rx="14.500" ry="19" fill="#5d4b48"/>
 <path d="M87 44c0-9 6-14.500 14-14.500 8 0 13 4 14.500 10-8-3-20-2-28.500 4.500z" fill="#463c3c"/>
 <path d="M98 46l20-4c3 8 3 16 0 22l-8 3c-6-3-10-10-12-21z" fill="#93bfdd"/>
</g></g>
<g><rect x="5.500" y="81.800" width="28.500" height="21.700" rx="4.500" fill="#3a3d3d" fill-opacity=".74"/><g fill="none" stroke="#f58d9c" stroke-width="1.100" stroke-linecap="round"><path d="M17.300 92.500v-4.300a2.600 2.600 0 0 1 5.200 0v6.500M16 94.500c0 2.500 1.700 4 3.900 4M19.900 98.500v2.300M15.500 101h9M12.500 85.500l14 15"/></g></g></svg><!--/TH5--></div>
<div class="abs thumb" id="th6" style="left:1145px;background:#cfcdc6"><!--TH6--><svg width="192" height="108" viewBox="0 0 192 108" preserveAspectRatio="none" >
<defs>
<filter id="b6" x="-5%" y="-5%" width="110%" height="110%"><feGaussianBlur stdDeviation="1.400"/></filter>
<filter id="b6b" x="-30%" y="-60%" width="160%" height="220%"><feGaussianBlur stdDeviation="2.200"/></filter>
<radialGradient id="g6" cx=".45" cy=".5" r=".7"><stop offset="0" stop-color="#dddcd8"/><stop offset=".7" stop-color="#d2d1cc"/><stop offset="1" stop-color="#9f9f9b"/></radialGradient>
<linearGradient id="v6" x1="0" y1="0" x2="1" y2="0"><stop offset="0" stop-color="#c9bca6" stop-opacity="0"/><stop offset="1" stop-color="#c4b7a0" stop-opacity=".85"/></linearGradient>
<linearGradient id="v6a" x1="0" y1="0" x2="1" y2="0"><stop offset="0" stop-color="#dfdbcf" stop-opacity="0"/><stop offset=".4" stop-color="#dfdbcf" stop-opacity=".7"/><stop offset="1" stop-color="#dfdbcf" stop-opacity=".7"/></linearGradient>
<pattern id="pl6" width="9" height="9" patternUnits="userSpaceOnUse" patternTransform="rotate(18)"><rect width="9" height="9" fill="#efe3e5"/><rect width="3.500" height="9" fill="#b8475a" fill-opacity=".85"/><rect width="9" height="3.500" fill="#b8475a" fill-opacity=".65"/><rect width="3.500" height="3.500" fill="#5c2536"/></pattern>
</defs>
<rect width="192" height="108" fill="url(#g6)"/>
<rect x="112" y="0" width="80" height="108" fill="url(#v6a)"/><rect x="150" y="0" width="42" height="108" fill="url(#v6)"/>
<rect x="0" y="0" width="192" height="1.600" fill="#8f8f8c"/>
<ellipse cx="172" cy="54" rx="20" ry="4.200" fill="#4a4a48" opacity=".85" filter="url(#b6b)"/>
<g filter="url(#b6)">
 <path d="M26 108c2-14 8-24 22-30l24-10h44l22 8c12 5 16 16 18 32z" fill="url(#pl6)"/>
 <path d="M72 70l10 38h-14z" fill="#5c2a3a" opacity=".6"/>
 <path d="M78 50c-2-24 10-42 28-42 16 0 26 12 24 32-2 18-8 38-18 48-6 6-16 6-22 0-8-8-11-24-12-38z" fill="#c09282"/>
 <path d="M104 7c14-2 28 8 26 30-1 6-3 10-5 12 0-14-4-26-14-32-6-4-14-4-20-2 3-4 8-7 13-8z" fill="#8b8581"/>
 <ellipse cx="100" cy="24" rx="16" ry="9" fill="#cfa394" opacity=".85"/>
 <ellipse cx="90" cy="40" rx="7" ry="3.500" fill="#7a5046" opacity=".7"/><ellipse cx="112" cy="44" rx="6.500" ry="3.300" fill="#7a5046" opacity=".7"/>
 <path d="M83 36c5-3 11-3 15 0M105 40c4-2 10-1 13 2" stroke="#5a3f38" stroke-width="1.600" fill="none"/>
 <path d="M96 42c-2 7-5 12-3 17 2 1.500 5 2 8 1" stroke="#9c6a5c" stroke-width="2" fill="none" opacity=".8"/>
 <path d="M86 66c4 2.500 10 3.500 15 2" stroke="#7e4a42" stroke-width="1.800" fill="none"/>
 <path d="M82 72c4 8 12 12 22 8-6 8-18 10-24 2z" fill="#a87868" opacity=".7"/>
</g>
<g><rect x="5.500" y="81.800" width="28.500" height="21.700" rx="4.500" fill="#3a3d3d" fill-opacity=".74"/><g fill="none" stroke="#f58d9c" stroke-width="1.100" stroke-linecap="round"><path d="M17.300 92.500v-4.300a2.600 2.600 0 0 1 5.200 0v6.500M16 94.500c0 2.500 1.700 4 3.900 4M19.900 98.500v2.300M15.500 101h9M12.500 85.500l14 15"/></g></g></svg><!--/TH6--></div>
<div class="abs thumb" id="th7" style="left:1346px;background:#bdb5bb"><!--TH7--><svg width="192" height="108" viewBox="0 0 192 108" preserveAspectRatio="none" >
<defs>
<filter id="b7" x="-5%" y="-5%" width="110%" height="110%"><feGaussianBlur stdDeviation="1.100"/></filter>
<filter id="b7b" x="-30%" y="-30%" width="160%" height="160%"><feGaussianBlur stdDeviation="2"/></filter>
<linearGradient id="g7" x1="0" y1="0" x2="1" y2="0"><stop offset="0" stop-color="#b4acb4"/><stop offset=".3" stop-color="#c6bec6"/><stop offset="1" stop-color="#d2cad1"/></linearGradient>
</defs>
<rect width="192" height="108" fill="url(#g7)"/>
<g filter="url(#b7)">
 <path d="M0 0h26l34 62 4 46H0z" fill="#beb6be"/>
 <path d="M0 0h10l30 108H0z" fill="#b1a9b1"/>
 <path d="M116 52l64 0 12 30v26h-80z" fill="#e6dfe3"/>
 <path d="M180 52l12-6v62h-4z" fill="#cfc7cd"/>
 <g filter="url(#b7b)"><ellipse cx="170" cy="11" rx="13" ry="11" fill="#e3dbe3"/><ellipse cx="170" cy="11" rx="6" ry="5" fill="#cfc7cf"/></g>
 <!-- shirt -->
 <path d="M34 108c2-14 10-22 24-28l26-8 36-1 28 4c16 4 26 16 30 33z" fill="#364141"/>
 <path d="M142 74l10 1c14 4 22 16 26 33h-26z" fill="#1b1b20"/>
 <path d="M34 108c2-12 8-20 20-26l6 26z" fill="#202326"/>
 <path d="M3 92c10-6 24-6 36 0l22 10v6H0z" fill="#131317"/>
 <path d="M128 98l6-2 3 6-4 2z" fill="#e6e8ea"/>
 <!-- neck/head -->
 <path d="M88 62l30-4 2 14c-8 5-24 5-34 0z" fill="#a98078"/>
 <path d="M78 36c-2-16 6-26 20-26 12 0 20 8 20 22 0 12-2 24-8 32-6 8-16 10-22 4-6-6-9-20-10-32z" fill="#b99088"/>
 <path d="M78 28c0-12 8-18 20-18 10 0 17 6 18 16-4-6-10-8-18-8-8 0-14 3-20 10z" fill="#5e585c"/>
 <ellipse cx="117" cy="35" rx="2.500" ry="5" fill="#b08078"/>
 <ellipse cx="96" cy="22" rx="13" ry="5" fill="#c49c94" opacity=".8"/>
 <ellipse cx="85" cy="31" rx="5.500" ry="2.800" fill="#6e4c4a" opacity=".75"/><ellipse cx="101" cy="32" rx="5.500" ry="2.800" fill="#6e4c4a" opacity=".75"/>
 <path d="M79 28.500c4-2 8-2 11 0M96 29c4-1.500 8-.5 11 1.500" stroke="#453434" stroke-width="1.500" fill="none"/>
 <path d="M90 33c-2 4-4 7-3 10 2 1 4 1 6 0" stroke="#96685f" stroke-width="1.700" fill="none" opacity=".85"/>
 <path d="M83 48c3 1.500 9 1.500 13 .5" stroke="#74484a" stroke-width="1.700" fill="none"/>
 <path d="M82 56c6 8 18 10 28 2-4 10-22 14-28 4z" fill="#9a746c" opacity=".7"/>
</g>
<g><rect x="5.500" y="81.800" width="28.500" height="21.700" rx="4.500" fill="#3a3d3d" fill-opacity=".74"/><g fill="none" stroke="#f58d9c" stroke-width="1.100" stroke-linecap="round"><path d="M17.300 92.500v-4.300a2.600 2.600 0 0 1 5.200 0v6.500M16 94.500c0 2.500 1.700 4 3.900 4M19.900 98.500v2.300M15.500 101h9M12.500 85.500l14 15"/></g></g></svg><!--/TH7--></div>
<!-- STATUS -->
<div class="abs t" style="left:69px;top:214.400px;font-size:16.600px;color:#111;letter-spacing:.257px">Viendo las aplicaciones de videoconferencia@arcgisa.es</div>
<svg class="ic" style="left:776px;top:210px" width="130" height="22" viewBox="0 0 130 22"><path d="M3 10.500h13.500M110 10.500h14M117 3.500v14" stroke="#222" stroke-width="1.400"/></svg>
<div class="abs t" style="left:815px;top:212.800px;font-size:17px;color:#111;letter-spacing:.200px;-webkit-text-stroke:.300px #111">100%</div>
<svg class="ic" style="left:1480px;top:205px" width="120" height="30" viewBox="1480 205 120 30"><g fill="none" stroke="#222" stroke-width="1.400" stroke-linecap="round" stroke-linejoin="round"><rect x="1486.500" y="213.500" width="16" height="11" rx="2.500"/><path d="M1491.500 225v2.300h6.500V225"/><path d="M1496.300 216.300v5.200l1.300-1.100.9 1.700.8-.400-.9-1.700h1.800z" fill="#222" stroke-width=".4"/><path d="M1534.500 221.500c3-3 8-8 9.500-7s-4.500 8.500-3 9.500 5.500-6.500 7-5.500-2.500 6.500-1 7.500 2.500-1.200 3.200-2" stroke-width="1.700"/><path d="M1592 213.500h3a2.500 2.500 0 0 1 2.500 2.500v3M1583 222v3a2.500 2.500 0 0 0 2.500 2.500h3"/></g></svg>
<!-- ACROBAT -->
<div id="acro" class="abs">
  <div id="tabbar" class="abs"></div>
  <div id="tab" class="abs"></div>
  <div id="toolbar" class="abs"></div>
  <!-- page & gutters -->
  <div class="abs" style="left:194px;top:72px;width:758px;height:536px;background:#fff;border-right:1px solid #dedde0"></div>
  <div class="abs" id="slide" style="left:200px;top:131px;width:744px;height:418px;background:#338acd"></div>
  <div class="abs" style="left:1088px;top:72px;width:16px;height:536px;background:#efeef0"></div>
  <div class="abs" style="left:1088px;top:88px;width:14px;height:63px;background:#c9c7cb"></div>
  <div class="abs" style="left:1104px;top:72px;width:42px;height:536px;background:#fff"></div>
  <!-- left palette -->
  <div class="abs" style="left:11px;top:83px;width:35px;height:226px;background:#fff;border:1px solid #c9c9cc;border-radius:4px"></div>
  <div class="abs" style="left:14px;top:87px;width:29px;height:3px;border-radius:2px;background:#c6c6c6"></div>
  <div class="abs" style="left:14px;top:98px;width:29px;height:28px;border-radius:3px;background:#0d5fd9"></div>
</div>
<svg class="ic" style="left:266px;top:245px" width="1146" height="608" viewBox="266 245 1146 608">
 <g fill="none" stroke="#2c2c2c" stroke-width="1.400" stroke-linecap="round" stroke-linejoin="round">
  <!-- tabbar -->
  <path d="M280 256h13M280 260h13M280 264.300h13" stroke-linecap="butt" stroke-width="1.500"/>
  <path d="M341.500 250v20" stroke="#cdcdcd" stroke-width="1"/>
  <path d="M348.500 260.500l6.700-6.500 6.700 6.500M350.500 259v6.500h3.200v-4h3v4h3.200V259"/>
  <path d="M391.300 253.300l2.200 4.600 5 .7-3.600 3.500.9 5-4.500-2.400-4.500 2.400.9-5-3.600-3.500 5-.7z" stroke="#555" stroke-width="1.300"/>
  <path d="M542.500 255.500l9 9M551.500 255.500l-9 9" stroke="#444" stroke-width="1.300"/>
  <path d="M573 260h10M578 255v10" stroke-width="1.300"/>
  <circle cx="1112" cy="260" r="6.600" stroke-width="1.300"/>
  <path d="M1109.800 258.300c0-1.400 1-2.200 2.200-2.200s2.200.8 2.200 2-1 1.500-1.700 2.100c-.4.300-.5.700-.5 1.200M1112 263.300v.4" stroke-width="1.200"/>
  <path d="M1135.500 264.500h11c-1.300-1.200-1.700-2.500-1.700-4.500v-1.500c0-2.300-1.700-4-3.800-4s-3.800 1.700-3.800 4v1.500c0 2-.4 3.300-1.700 4.500zM1139.800 266.300c.3.600.700.9 1.200.9s.9-.3 1.200-.9" stroke="#bdbdbd" stroke-width="1.200"/>
  <path d="M1294 259.700h12.700" stroke-width="1.300"/>
  <path d="M1339.800 256.800h8.200v7.700h-8.200zM1342.200 256.500v-2.500h8.400v7.800h-2.400" stroke-width="1.200"/>
  <path d="M1383.700 254.800l9.400 9.400M1393.100 254.800l-9.400 9.400" stroke-width="1.300"/>
  <!-- toolbar -->
  <circle cx="1152.200" cy="294.600" r="5.300" stroke-width="1.500"/><path d="M1156.200 298.600l3.800 3.800" stroke-width="1.600"/>
  <path d="M1178.500 288v15" stroke="#e6e6e6" stroke-width="1"/>
  <path d="M1195 290.200h9.500l2.700 2.700v8.600h-12.200zM1197.800 290.500v3.800h6v-3.800M1197.800 301.300v-4.300h6.700v4.300"/>
  <path d="M1234.200 301h-.2c-2 0-3.500-1.500-3.500-3.400 0-1.700 1.200-3.100 2.900-3.300.4-2.500 2.300-4.300 4.800-4.300s4.500 1.800 4.800 4.200c1.700.2 3 1.600 3 3.400s-1.500 3.400-3.500 3.400h-.6M1238.200 303.500v-7.800M1235.300 298.300l2.900-2.900 2.900 2.900"/>
  <path d="M1270.800 293.300v-3.300h8.800v3.300M1270.800 300.300h-1.800c-.9 0-1.600-.7-1.600-1.600v-3.800c0-.9.700-1.600 1.600-1.600h12.400c.9 0 1.600.7 1.600 1.600v3.800c0 .9-.7 1.600-1.600 1.600h-1.800M1270.800 297.300h8.800v5.200h-8.800zM1273 300h4.300"/>
  <path d="M1297.500 289.500v13" stroke="#c8c8c8" stroke-width="1"/>
  <path d="M1320.500 302.300c-.4 0-.7.100-1.200.1-3.800 0-6.800-3-6.800-6.800s3-6.800 6.800-6.800 6.800 3 6.800 6.800c0 .7-.1 1.300-.3 1.900M1316.700 293.800c0-1.500 1.200-2.700 2.700-2.700s2.700 1.200 2.700 2.700-1.200 2.700-2.700 2.700-2.700-1.200-2.700-2.700zM1314.800 300.300c.8-1.700 2.500-2.600 4.600-2.600 1 0 1.900.2 2.700.6M1324.300 298v6M1321.300 301h6"/>
  <g transform="translate(1357.300 296) rotate(-45)"><path d="M-.8 -2.800H-5.400a2.800 2.800 0 0 0 0 5.600h2.400M.8 2.800H5.400a2.800 2.800 0 0 0 0-5.600h-2.400"/></g>
  <path d="M1387 290.500h14v10h-14zM1387 290.500l7 5.500 7-5.500M1387 300.500l5.300-5.300M1401 300.500l-5.300-5.300" stroke-width="1.300"/>
  <!-- right column -->
  <path d="M1357.500 325.500l3.300-3.300 3.300 3.300" stroke-width="1.500" stroke="#444"/>
  <path d="M1357.500 844l3.300 3.300 3.300-3.300" stroke-width="1.500" stroke="#444"/>
  <path d="M1383.500 333.500h9.800c.6 0 1 .4 1 1v7c0 .6-.4 1-1 1h-4.500l-2.800 2.500v-2.500h-2.500c-.6 0-1-.4-1-1v-7c0-.6.400-1 1-1zM1396.700 336.500c.6 0 1 .4 1 1v6.800c0 .6-.4 1-1 1h-.7v2l-2.400-2h-2"/>
  <path d="M1384 368.500h8.200v13.500l-4.100-3.200-4.100 3.200zM1394.500 370.500h3.300M1394.500 372.800h3.300M1394.500 375.100h3.300" stroke-linecap="butt"/>
  <path d="M1391.500 402.300h-5c-.8 0-1.500.7-1.500 1.500v10M1388 405.300h5.200l3.800 3.800v7.200c0 .6-.4 1-1 1h-8c-.6 0-1-.4-1-1v-10c0-.6.400-1 1-1zM1393 405.500v3.800h3.800"/>
  <!-- left palette icons -->
  <path d="M290.300 349.500v12.800l3-2.800 2.200 5 2-.9-2.200-4.900 4.200-.2z" fill="#fff" stroke="none"/>
  <path d="M303.500 362.500v4h-4z" fill="#fff" stroke="none"/>
  <path d="M289.500 386.500h9.500c.8 0 1.500.7 1.500 1.500v7c0 .8-.7 1.500-1.500 1.500h-4.500l-3.500 3.200v-3.200h-1.500c-.8 0-1.500-.7-1.500-1.500v-7c0-.8.700-1.500 1.500-1.500zM294.300 389v5M291.800 391.500h5"/>
  <path d="M303.500 398.500v4h-4zM303.500 434v4h-4zM303.500 470v4h-4zM303.500 505.500v4h-4zM303.500 541.500v4h-4z" fill="#2c2c2c" stroke="none"/>
  <path d="M289.500 431l8-8.500c.6-.6 1.500-.6 2.100 0l1 1c.6.600.6 1.500 0 2.100l-8 8.400zM287.300 434.500l2.200-3.500 3.100 3z" /><path d="M293 434.800h8" stroke="#999" stroke-width="1.800"/>
  <path d="M301 469.300c-3.500 1-8.500-1-12.300-2.500-1.800-.8-1.800-3 0-4.500 2.500-2 8-3.500 11-2 2.300 1.200 1.500 4.300-1 5.500-2 .9-4 .9-5.500.2"/>
  <path d="M287 492.500h15v14h-15z" stroke-dasharray="2 1.300" stroke-linecap="butt" stroke-width="1.300"/>
  <path d="M291.500 503.500l3-8.500 3 8.500M292.500 501h4" stroke-width="1.200"/>
  <path d="M288.500 541.500c-.5-3 .5-6.500 3-9l3.500-3.500c.6-.6 1.500-.6 2.100 0l3.500 3.500c.6.600.6 1.500 0 2.100l-2.600 3c-2.500 2.500-6 3.900-9.500 3.900zM288.800 541.200l4.700-4.700M296 543.500c1-.5 1.500-1.800 2.300-1.800s.5 1.800 1.400 1.800 1-.8 1.800-.8"/>
  <!-- bottom right col -->
  <path d="M1386.200 679.500l4.500-4.500 4.500 4.500" stroke="#8e8e8e" stroke-width="1.600"/>
  <path d="M1384.500 764.800h7l3.500 3.500v9c0 .6-.4 1-1 1h-8.500c-.6 0-1-.4-1-1v-11.500c0-.6.400-1 1-1zM1391.500 765v3.500h3.500M1387.300 774.500v-2.500h2.500M1392.300 770.800v2.500h-2.500" stroke-width="1.300"/>
  <path d="M1401.500 777v3.500h-3.500z" fill="#2c2c2c" stroke="none"/>
  <circle cx="1390" cy="803.500" r="5" stroke-width="1.500"/><path d="M1393.800 807.300l4 4M1387.500 803.500h5M1390 801v5" stroke-width="1.500"/>
  <circle cx="1390" cy="836" r="5" stroke-width="1.500"/><path d="M1393.800 839.800l4 4M1387.500 836h5" stroke-width="1.500"/>
 </g>
</svg>
<!-- acrobat text -->
<div class="abs t" style="left:300px;top:254.500px;font-size:10.500px;color:#2c2c2c;-webkit-text-stroke:.200px #2c2c2c">Menú</div>
<div class="abs t" style="left:406px;top:255px;font-size:12.500px;color:#222">Presentacion Inform...</div>
<div class="abs" style="left:565.500px;top:249.500px;width:60px;height:21px;border:1px solid #b4b4b4;border-radius:4px"></div>
<div class="abs t" style="left:592px;top:254.500px;font-size:10.500px;color:#2c2c2c;-webkit-text-stroke:.150px #2c2c2c">Crear</div>
<div class="abs t" style="left:1169px;top:252.500px;font-size:14px;color:#222;letter-spacing:.320px">Iniciar sesión</div>
<div class="abs t" style="left:279.500px;top:289.500px;font-size:12px;color:#2c2c2c;letter-spacing:.200px">Todas las herramientas</div>
<div class="abs t" style="left:429.500px;top:289.500px;font-size:12px;color:#2c2c2c;letter-spacing:.200px">Editar</div>
<div class="abs t" style="left:483.500px;top:289.500px;font-size:12px;color:#2c2c2c;letter-spacing:.200px">Convertir</div>
<div class="abs t" style="left:556.500px;top:289.500px;font-size:12px;color:#2c2c2c;letter-spacing:.200px">Firma electrónica</div>
<div class="abs t" style="left:981.500px;top:289.500px;font-size:12px;color:#2c2c2c;letter-spacing:.200px">Buscar texto o herramientas</div>
<!-- page nav -->
<div class="abs" style="left:1376.500px;top:598.500px;width:29px;height:28px;border:1px solid #b9b9bd;border-radius:4px;background:#fff"></div>
<div class="abs t" style="left:1387.500px;top:606px;font-size:11.500px;color:#222">1</div>
<div class="abs t" style="left:1387.500px;top:637px;font-size:11.500px;color:#222">8</div>
<div class="abs" style="left:1376.500px;top:693px;width:29px;height:27.500px;border-radius:3px;background:#e6e6e8"></div>
<svg class="ic" style="left:1376px;top:693px" width="40" height="30" viewBox="1376 693 40 30"><path d="M1386.500 704.500l4.200 4.200 4.200-4.200" fill="none" stroke="#1e1e1e" stroke-width="2"/><path d="M1398 701.500v14l3.200-3 2 4.600 1.900-.8-2-4.600h4.300z" fill="#111" stroke="#fff" stroke-width=".9"/></svg>
<svg class="ic" style="left:1380px;top:738px" width="22" height="12" viewBox="1380 738 22 12"><path d="M1385.500 741c.8 3.300 3 5.500 5.500 5.500s4.700-2.200 5.500-5.500" fill="none" stroke="#2c2c2c" stroke-width="1.400"/></svg>
<div class="abs" style="left:1266px;top:723.200px;width:144.500px;height:20.600px;border-radius:4px;background:#6f6f6f"></div>
<div class="abs t" style="left:1274.500px;top:727.500px;font-size:10.500px;color:#fff">Ir a la página siguiente (→)</div>
<!-- SLIDE CONTENT -->
<svg class="ic" style="left:466px;top:376px" width="744" height="418" viewBox="466 376 744 418">
 <!-- logo -->
 <ellipse cx="527.900" cy="438.700" rx="35.100" ry="32.900" fill="#fff"/>
 <path d="M562 447c2.500-2.500 4.500-5 7.200-7.700l-7.200-.5z" fill="#fff"/>
 <path d="M490 434.500H503c1-9.500 7-18.500 17.500-18.800 7.500-.2 11.500 2.800 23.100 3.300 8.400.5 13.400 9 19.900 14l2.500 1.500H572v4.300H490z" fill="#338acd"/>
 <path d="M563 438.800h6.300l-6.300 1.500z" fill="#fff"/>
 <path d="M492.800 443.300H503c2 8.700 8 18.200 17.500 18.700 9.500 0 14.500-3.500 25-4 7.500-1 14.500-11 23.500-18.500" fill="none" stroke="#338acd" stroke-width=".8"/>
 <!-- id card -->
 <rect x="676.200" y="695" width="46.800" height="32.800" rx="2.500" fill="#fff"/>
 <rect x="695.600" y="687.400" width="9" height="11" rx="4" fill="#fff" stroke="#338acd" stroke-width="1.600"/>
 <circle cx="690.700" cy="707.200" r="4.800" fill="#338acd"/>
 <path d="M681 722.700c0-5 4-8.200 9.700-8.200s9.700 3.200 9.700 8.200z" fill="#338acd"/>
 <path d="M705 707.700h13.500M705 714.700h13.500M705 721.700h13.500" stroke="#338acd" stroke-width="2"/>
 <!-- gears -->
 <path d="M866.5 701.7 L868.9 703.2 L867.7 706.0 L864.9 705.4 L862.9 707.4 L863.5 710.2 L860.7 711.4 L859.2 709.0 L856.2 709.0 L854.7 711.4 L851.9 710.2 L852.5 707.4 L850.5 705.4 L847.7 706.0 L846.5 703.2 L848.9 701.7 L848.9 698.7 L846.5 697.2 L847.7 694.4 L850.5 695.0 L852.5 693.0 L851.9 690.2 L854.7 689.0 L856.2 691.4 L859.2 691.4 L860.7 689.0 L863.5 690.2 L862.9 693.0 L864.9 695.0 L867.7 694.4 L868.9 697.2 L866.5 698.7Z" fill="#fff" stroke="#fff" stroke-width="2.200" stroke-linejoin="round"/><circle cx="857.700" cy="700.200" r="4.300" fill="#338acd"/>
 <path d="M853.2 719.2 L856.0 719.7 L856.0 722.7 L853.2 723.2 L852.1 725.9 L853.7 728.2 L851.5 730.4 L849.2 728.8 L846.5 729.9 L846.0 732.7 L843.0 732.7 L842.5 729.9 L839.8 728.8 L837.5 730.4 L835.3 728.2 L836.9 725.9 L835.8 723.2 L833.0 722.7 L833.0 719.7 L835.8 719.2 L836.9 716.5 L835.3 714.2 L837.5 712.0 L839.8 713.6 L842.5 712.5 L843.0 709.7 L846.0 709.7 L846.5 712.5 L849.2 713.6 L851.5 712.0 L853.7 714.2 L852.1 716.5Z" fill="#fff" stroke="#fff" stroke-width="2.200" stroke-linejoin="round"/><circle cx="844.500" cy="721.200" r="4.100" fill="#338acd"/>
 <!-- handshake -->
 <path d="M983.800 695.800l5.500 3.600-5.800 10.200-6.200-3.400zM1021.200 695.800l6.800 10.700-5.500 3.100-6.500-10.200z" fill="#fff"/>
 <path d="M990.300 701l7.700.8 5-2 10.700 1.700 2.500-.5 4.300 8.300-4 4.200-.5 2.500-10.800 10.300-2.200-1.200-2 .3-2.200-1.500-2 .2-2-1.800-2.300 0-4.300-4.300 1.500-3.200-4.500-5.300z" fill="#fff"/>
 <path d="M1003.200 700.300l-7 7.500c-1 1.200-.8 2.800.2 3.600s2.600.8 3.600-.4l4.800-6 11.500 9.500" fill="none" stroke="#338acd" stroke-width=".9" stroke-linejoin="round"/>
 <path d="M992.500 711.500l-4 5M996 714.500l-4 5M1000 718l-4 4.500M1004 721l-3.500 4" stroke="#338acd" stroke-width=".8"/>
</svg>

<div class="abs t" id="s1" style="left:605px;top:426.500px;font-size:24.500px;color:#fff;text-decoration:underline;text-decoration-thickness:1.600px;text-underline-offset:5.300px;transform:scaleX(.949);transform-origin:0 0">AGUA Y RESIDUOS DEL CAMPO DE GIBRALTAR,</div>
<div class="abs t" id="s2" style="left:851px;top:460.300px;font-size:24.500px;color:#fff;text-decoration:underline;text-decoration-thickness:1.600px;text-underline-offset:5.300px;transform:scaleX(.949);transform-origin:0 0">S.A.</div>
<div class="abs t" id="s3" style="left:570.400px;top:535.800px;font-size:41.500px;font-weight:bold;color:#fff;transform:scaleX(.873);transform-origin:0 0">RESUMEN INFORME DE GESTIÓN</div>
<div class="abs t" id="s4" style="left:734.600px;top:585.200px;font-size:37px;color:#fff;transform:scaleX(.910);transform-origin:0 0">EJERCICIO 2023</div>
</div>
</body>
</html>
